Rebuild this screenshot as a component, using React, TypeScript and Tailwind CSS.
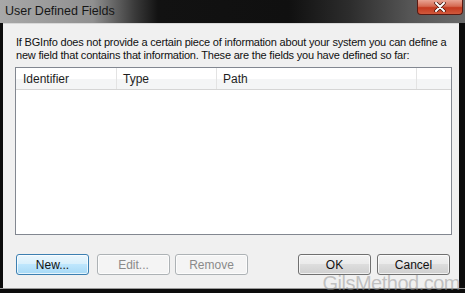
const FONT = { fontFamily: '"Liberation Sans", Arial, sans-serif' };

type BtnProps = { label: string; kind?: "default" | "normal" | "disabled" };

const DialogButton = ({ label, kind = "normal" }: BtnProps) => {
  const styles = {
    default:
      "border-[#3c7fb1] bg-[linear-gradient(#eaf6fd_0%,#d9f0fc_45%,#bee6fd_50%,#a7d9f5_100%)] text-[#111]",
    normal:
      "border-[#707070] bg-[linear-gradient(#f2f2f2_0%,#ebebeb_45%,#dddddd_50%,#cfcfcf_100%)] text-[#111]",
    disabled: "border-[#adb2b5] bg-[#f4f4f4] text-[#8a8a8a]",
  };
  return (
    <div
      className={`w-[73px] h-[21px] rounded-[3px] border flex items-center justify-center text-[12px] shadow-[inset_0_0_0_1px_rgba(255,255,255,0.7)] ${styles[kind]}`}
    >
      {label}
    </div>
  );
};

export default function App() {
  return (
    <div className="relative w-[465px] h-[293px] overflow-hidden bg-[#0c0c0c] flex flex-col" style={FONT}>
      <div className="h-[23px] flex items-center pl-[5px] bg-[linear-gradient(90deg,#a8a8a8_0%,#909090_20%,#3a3a3a_29%,#121212_34%,#101010_62%,#2c2c2c_75%,#555555_88%,#6a6a6a_100%)]">
        <span className="text-[12.5px] text-[#161616]">User Defined Fields</span>
      </div>

      <div className="absolute right-[2px] top-0 w-[46px] h-[15px] rounded-b-[4px] border border-[#5a1a12] border-t-0 bg-[linear-gradient(#e9a493_0%,#d56a52_45%,#c4391f_55%,#d0593c_100%)] flex items-center justify-center">
        <svg width="12" height="10" viewBox="0 0 12 10">
          <path d="M2 1 L10 9 M10 1 L2 9" stroke="#3b1008" strokeWidth="3.4" strokeLinecap="round" />
          <path d="M2 1 L10 9 M10 1 L2 9" stroke="#ffffff" strokeWidth="2" strokeLinecap="round" />
        </svg>
      </div>

      <div className="ml-[3px] w-[456px] h-[265px] bg-[#f0f0f0] border-t border-[#d8d8d8] flex flex-col pl-[12px] pt-[12px]">
        <p className="text-[11px] leading-[13px] text-[#111] pl-[1px] whitespace-nowrap tracking-[-0.2px]">
          If BGInfo does not provide a certain piece of information about your system you can define a
          <br />
          new field that contains that information. These are the fields you have defined so far:
        </p>

        <div className="mt-[5px] w-[437px] h-[168px] border border-[#828790] bg-white flex flex-col">
          <div className="h-[22px] flex text-[12px] text-[#1e1e1e] border-b border-[#d5d5d5] bg-[linear-gradient(#ffffff_0%,#ffffff_50%,#f4f5f6_51%,#f4f5f6_100%)]">
            <div className="w-[101px] border-r border-[#e3e3e3] flex items-center pl-[7px]">Identifier</div>
            <div className="w-[100px] border-r border-[#e3e3e3] flex items-center pl-[6px]">Type</div>
            <div className="w-[200px] border-r border-[#e3e3e3] flex items-center pl-[6px]">Path</div>
            <div className="flex-1" />
          </div>
        </div>

        <div className="mt-[19px] flex items-center pl-[1px]">
          <DialogButton label="New..." kind="default" />
          <div className="ml-[8px]">
            <DialogButton label="Edit..." kind="disabled" />
          </div>
          <div className="ml-[5px]">
            <DialogButton label="Remove" kind="disabled" />
          </div>
          <div className="ml-[50px]">
            <DialogButton label="OK" />
          </div>
          <div className="ml-[6px]">
            <DialogButton label="Cancel" />
          </div>
        </div>
      </div>

      <div className="h-[1px] bg-[#9a9a9a]" />

      <div className="absolute right-[5px] bottom-0 text-[20px] leading-[20px] text-[rgba(150,150,150,0.55)] tracking-[-0.5px]">
        GilsMethod.com
      </div>
    </div>
  );
}
